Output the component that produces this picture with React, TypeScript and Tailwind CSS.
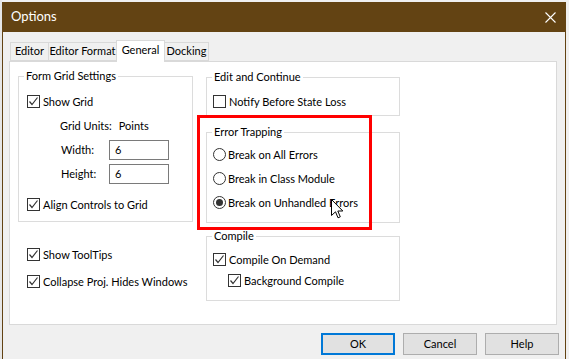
import type { ReactNode } from 'react'

const font = "font-['Lato','Liberation_Sans',sans-serif]"

function CheckBox({ checked, label }: { checked: boolean; label: string }) {
  return (
    <div className="flex h-[13px] items-center gap-[3px]">
      <div className="flex h-[13px] w-[13px] shrink-0 items-center justify-center border border-[#333333] bg-white">
        {checked && (
          <svg width="11" height="11" viewBox="0 0 11 11">
            <path d="M1.5 5.5 L4 8.5 L9.5 1.5" fill="none" stroke="#333333" strokeWidth="1.2" />
          </svg>
        )}
      </div>
      <span className="whitespace-nowrap text-[11px] leading-[16px] text-black">{label}</span>
    </div>
  )
}

function Radio({ checked, label }: { checked: boolean; label: string }) {
  return (
    <div className="flex h-[13px] items-center gap-[2px]">
      <div className="flex h-[13px] w-[13px] shrink-0 items-center justify-center rounded-full border border-[#333333] bg-white">
        {checked && <div className="h-[7px] w-[7px] rounded-full bg-[#333333]" />}
      </div>
      <span className="whitespace-nowrap text-[11px] leading-[16px] text-black">{label}</span>
    </div>
  )
}

function GroupBox({ title, className, children }: { title: string; className: string; children: ReactNode }) {
  return (
    <div className={`relative border border-[#dcdcdc] ${className}`}>
      <span className="absolute left-[5px] top-[-9px] whitespace-nowrap bg-white px-[2px] text-[11px] leading-[16px] text-black">
        {title}
      </span>
      {children}
    </div>
  )
}

function Tab({ label, active, className }: { label: string; active?: boolean; className: string }) {
  return (
    <div
      className={`flex items-center justify-center whitespace-nowrap border border-[#d9d9d9] text-[11px] text-black ${
        active ? 'z-10 -mb-px h-[22px] border-b-0 bg-white pb-[2px]' : 'h-[19px] bg-[#f0f0f0]'
      } ${className}`}
    >
      {label}
    </div>
  )
}

function Button({ label, focused }: { label: string; focused?: boolean }) {
  return (
    <div
      className={`flex h-[22px] w-[74px] items-center justify-center bg-[#e1e1e1] text-[11px] text-black ${
        focused ? 'border-2 border-[#0078d7]' : 'border border-[#adadad]'
      }`}
    >
      {label}
    </div>
  )
}

export default function App() {
  return (
    <div className={`relative flex h-[359px] w-[569px] overflow-hidden bg-[#f0f0f0] ${font}`}>
      <div className="w-[2px] shrink-0 bg-[#e6e6e6]" />

      {/* Dialog */}
      <div className="mt-[2px] flex w-[564px] shrink-0 flex-col border-x border-[#634313] bg-[#f0f0f0]">
        <div className="flex h-[30px] shrink-0 items-center justify-between bg-[#634313] pl-[8px] pr-[9px]">
          <span className="text-[13px] text-white">Options</span>
          <svg width="11" height="11" viewBox="0 0 11 11">
            <path d="M0.5 0.5 L10.5 10.5 M10.5 0.5 L0.5 10.5" stroke="#ffffff" strokeWidth="1.1" />
          </svg>
        </div>

        <div className="flex flex-col pl-[6px] pr-[8px] pt-[7px]">
          {/* Tabs */}
          <div className="flex h-[22px] items-end pl-[1px]">
            <Tab label="Editor" className="w-[39px]" />
            <Tab label="Editor Format" className="-ml-px w-[69px]" />
            <Tab label="General" active className="-ml-px w-[49px]" />
            <Tab label="Docking" className="-ml-px w-[45px]" />
          </div>

          {/* Panel */}
          <div className="flex h-[264px] gap-[13px] border border-[#d9d9d9] bg-white pl-[8px]">
            <div className="flex w-[175px] flex-col pt-[14px]">
              <GroupBox title="Form Grid Settings" className="h-[146px] pl-[8px] pt-[18px]">
                <CheckBox checked label="Show Grid" />
                <div className="ml-[33px] mt-[10px] flex h-[16px] items-center gap-[7px] text-[11px]">
                  <span>Grid Units:</span>
                  <span>Points</span>
                </div>
                <div className="ml-[34px] mt-[6px] flex h-[20px] items-center text-[11px]">
                  <span className="w-[48px]">Width:</span>
                  <div className="flex h-[20px] w-[60px] items-center border border-[#7a7a7a] pl-[5px]">6</div>
                </div>
                <div className="ml-[34px] mt-[4px] flex h-[20px] items-center text-[11px]">
                  <span className="w-[48px]">Height:</span>
                  <div className="flex h-[20px] w-[60px] items-center border border-[#7a7a7a] pl-[5px]">6</div>
                </div>
                <div className="mt-[14px]">
                  <CheckBox checked label="Align Controls to Grid" />
                </div>
              </GroupBox>
              <div className="ml-[9px] mt-[26px]">
                <CheckBox checked label="Show ToolTips" />
              </div>
              <div className="ml-[9px] mt-[14px]">
                <CheckBox checked label="Collapse Proj. Hides Windows" />
              </div>
            </div>

            <div className="flex w-[194px] flex-col pt-[15px]">
              <GroupBox title="Edit and Continue" className="h-[39px] pl-[6px] pt-[17px]">
                <CheckBox checked={false} label="Notify Before State Loss" />
              </GroupBox>
              <GroupBox title="Error Trapping" className="mt-[16px] flex h-[91px] flex-col gap-[11px] pl-[6px] pt-[15px]">
                <Radio checked={false} label="Break on All Errors" />
                <Radio checked={false} label="Break in Class Module" />
                <Radio checked label="Break on Unhandled Errors" />
              </GroupBox>
              <GroupBox title="Compile" className="mt-[13px] h-[65px] pl-[6px] pt-[16px]">
                <CheckBox checked label="Compile On Demand" />
                <div className="ml-[15px] mt-[8px]">
                  <CheckBox checked label="Background Compile" />
                </div>
              </GroupBox>
            </div>
          </div>

          {/* Buttons */}
          <div className="-mr-[2px] mt-[8px] flex justify-end gap-[8px]">
            <Button label="OK" focused />
            <Button label="Cancel" />
            <Button label="Help" />
          </div>
        </div>
      </div>

      <div className="flex-1 bg-[#f0f0f0]" />

      {/* Highlight annotation */}
      <div className="pointer-events-none absolute left-[197px] top-[115px] z-20 h-[115px] w-[175px] border-[3px] border-[#ff0000]" />

      {/* Mouse cursor */}
      <svg className="absolute left-[331px] top-[199px] z-30" width="13" height="20" viewBox="0 0 13 20">
        <path
          d="M0.5 0.5 L0.5 16.5 L4.5 12.8 L7 18.8 L9.3 17.8 L6.8 12 L11.8 12 Z"
          fill="#ffffff"
          stroke="#000000"
          strokeWidth="1"
          strokeLinejoin="miter"
        />
      </svg>
    </div>
  )
}
